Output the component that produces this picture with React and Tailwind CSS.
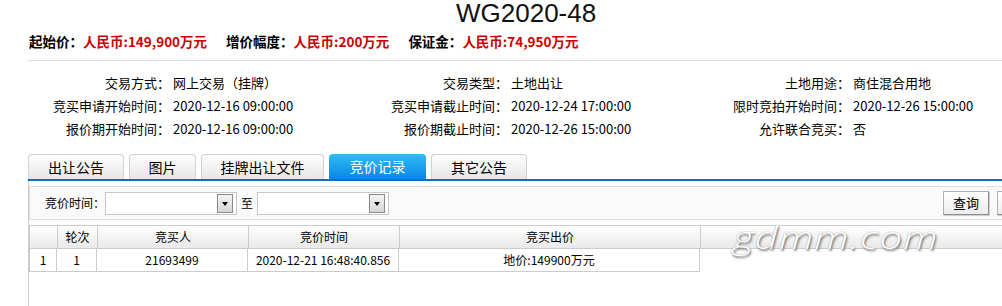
import React from 'react';

const infoRows = [
  ['交易方式：', '网上交易（挂牌）', '交易类型：', '土地出让', '土地用途：', '商住混合用地'],
  ['竞买申请开始时间：', '2020-12-16 09:00:00', '竞买申请截止时间：', '2020-12-24 17:00:00', '限时竞拍开始时间：', '2020-12-26 15:00:00'],
  ['报价期开始时间：', '2020-12-16 09:00:00', '报价期截止时间：', '2020-12-26 15:00:00', '允许联合竞买：', '否'],
];

const tabs = [
  { label: '出让公告', w: 'w-[96px]' },
  { label: '图片', w: 'w-[67px]' },
  { label: '挂牌出让文件', w: 'w-[123px]' },
  { label: '竞价记录', w: 'w-[97px]', active: true },
  { label: '其它公告', w: 'w-[96px]' },
];

const cols = ['w-[28px]', 'w-[40px]', 'w-[151px]', 'w-[151px]', 'w-[301px]'];

function Select() {
  return (
    <div className="w-[132px] h-[23px] border border-[#c8c8c8] bg-white flex items-center justify-end pr-[3px]">
      <div className="w-[16px] h-[19px] border border-[#8a8a8a] bg-linear-to-b from-[#f4f4f4] to-[#d6d6d6] flex items-center justify-center">
        <div className="w-0 h-0 border-l-[3.5px] border-r-[3.5px] border-t-[4px] border-l-transparent border-r-transparent border-t-black mt-[1px]" />
      </div>
    </div>
  );
}

function Button({ children }) {
  return (
    <div className="shrink-0 w-[46px] h-[24px] border border-[#b0b0b0] border-r-[#8c8c8c] border-b-[#8c8c8c] bg-linear-to-b from-white to-[#ececec] shadow-[1px_1px_0_#cfcfcf] flex items-center justify-center text-[13px]">
      {children}
    </div>
  );
}

export default function App() {
  return (
    <div className="relative w-[1002px] h-[306px] overflow-hidden bg-white text-black font-['Noto_Sans_CJK_SC',sans-serif]">
      {/* title */}
      <div className="h-[24px] pl-[456px] text-[26px] leading-[26px] text-[#111] font-['Liberation_Sans','Noto_Sans_CJK_SC',sans-serif]">
        WG2020-48
      </div>

      {/* price summary */}
      <div className="mt-[8px] pl-[29px] h-[18px] flex items-center gap-[19px] text-[13.5px] font-bold leading-[18px]">
        <span>起始价：<span className="text-[#cc0000]">人民币:149,900万元</span></span>
        <span>增价幅度：<span className="text-[#cc0000]">人民币:200万元</span></span>
        <span>保证金：<span className="text-[#cc0000]">人民币:74,950万元</span></span>
      </div>

      <div className="mt-[10px] ml-[28px] border-t border-[#dddddd]" />

      {/* info grid */}
      <div className="mt-[10px] grid grid-cols-[170px_170px_168px_172px_170px_1fr] text-[13px] leading-[23px]">
        {infoRows.map((row, i) =>
          row.map((cell, j) => (
            <div key={`${i}-${j}`} className={j % 2 === 0 ? 'h-[23px] text-right whitespace-nowrap' : 'h-[23px] pl-[3px] whitespace-nowrap'}>
              {cell}
            </div>
          ))
        )}
      </div>

      {/* tabs */}
      <div className="mt-[14px] ml-[28px] flex gap-[5px] h-[25px]">
        {tabs.map((t) => (
          <div
            key={t.label}
            className={
              t.active
                ? `${t.w} h-[25px] rounded-t-[4px] bg-linear-to-b from-[#2dbdf7] to-[#0a86e4] text-white text-[14px] flex items-center justify-center`
                : `${t.w} h-[25px] rounded-t-[4px] border border-b-0 border-[#d0d0d0] bg-linear-to-b from-white to-[#e6e6e6] text-[14px] flex items-center justify-center`
            }
          >
            {t.label}
          </div>
        ))}
      </div>
      <div className="ml-[28px] h-[2px] bg-[#0c6fc5]" />

      {/* panel */}
      <div className="ml-[28px] w-[1100px] h-[130px] border-l border-[#cccccc] pt-[5px]">
        <div className="h-[34px] border border-[#dddddd] bg-[#fafafa] flex items-center pl-[15px] text-[12px]">
          <span className="w-[60px] shrink-0">竞价时间：</span>
          <Select />
          <span className="mx-[4px]">至</span>
          <Select />
          <div className="ml-[554px] flex gap-[8px]">
            <Button>查询</Button>
            <Button>重置</Button>
          </div>
        </div>

        <div className="mt-[5px] text-[12px]">
          <div className="flex h-[24px] border border-[#cccccc] bg-linear-to-b from-white to-[#e9e9e9]">
            {['', '轮次', '竞买人', '竞价时间', '竞买出价'].map((h, i) => (
              <div key={i} className={`${cols[i]} shrink-0 border-r border-[#cccccc] flex items-center justify-center`}>
                {h}
              </div>
            ))}
            <div className="flex-1" />
          </div>
          <div className="flex h-[23px]">
            {['1', '1', '21693499', '2020-12-21 16:48:40.856', '地价:149900万元'].map((c, i) => (
              <div
                key={i}
                className={`${cols[i]} shrink-0 border-r border-b border-[#cccccc] flex items-center justify-center ${i === 0 ? 'border-l' : ''}`}
              >
                {c}
              </div>
            ))}
          </div>
        </div>
      </div>

      {/* watermark */}
      <div className="absolute left-[733px] top-[221px] origin-left scale-x-[1.25] text-[32px] leading-none italic font-light tracking-[1px] text-white font-['Open_Sans',sans-serif] [text-shadow:0_0_1px_#8a8a8a,1px_2px_2px_#6f6f6f]">
        gdmm.com
      </div>
    </div>
  );
}
